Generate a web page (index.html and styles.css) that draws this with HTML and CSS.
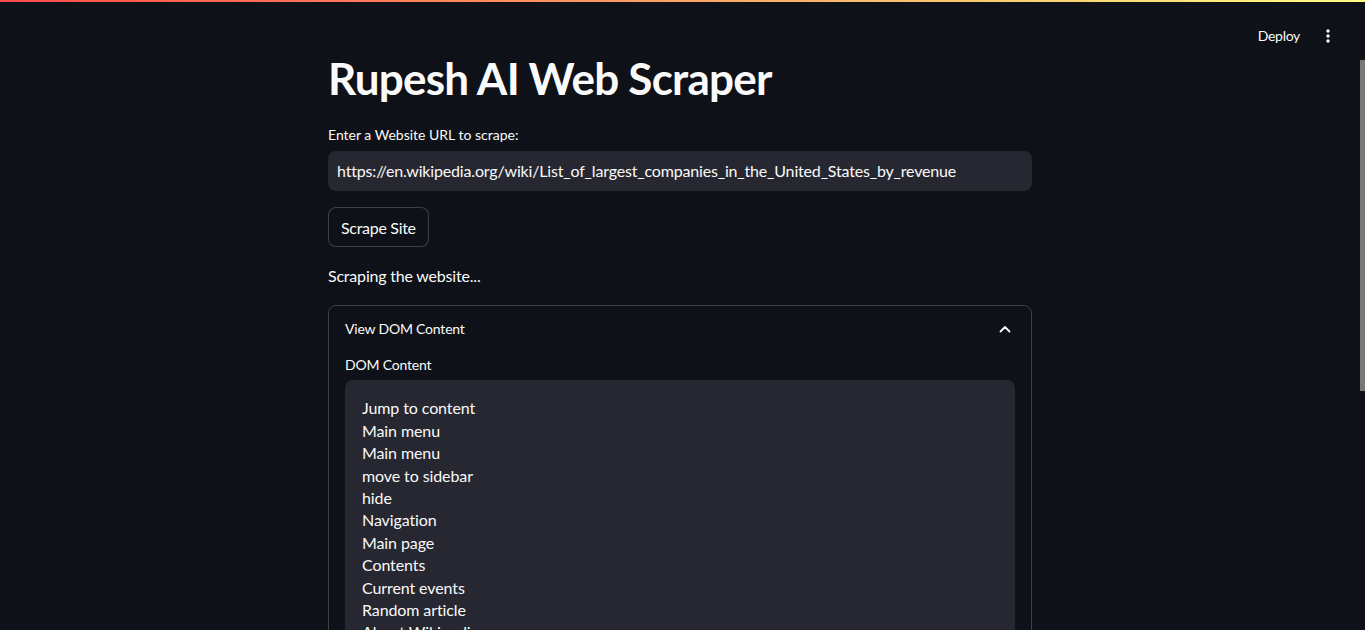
FILE: index.html
```html
<!DOCTYPE html>
<html lang="en">
<head>
<meta charset="utf-8">
<title>Rupesh AI Web Scraper</title>
<link rel="stylesheet" href="styles.css">
</head>
<body>
<div class="app">
  <header class="header">
    <div class="decoration"></div>
    <div class="toolbar">
      <span class="deploy">Deploy</span>
      <span class="kebab" aria-label="Main menu">
        <svg width="4" height="14" viewBox="0 0 4 14"><circle cx="2" cy="2" r="1.7" fill="#fafafa"/><circle cx="2" cy="7" r="1.7" fill="#fafafa"/><circle cx="2" cy="12" r="1.7" fill="#fafafa"/></svg>
      </span>
    </div>
  </header>
  <main class="main">
    <div class="block">
      <h1 class="title">Rupesh AI Web Scraper</h1>
      <label class="label">Enter a Website URL to scrape:</label>
      <div class="input">https://en.wikipedia.org/wiki/List_of_largest_companies_in_the_United_States_by_revenue</div>
      <div class="btn-row"><button class="btn">Scrape Site</button></div>
      <p class="status">Scraping the website...</p>
      <div class="expander">
        <div class="exp-head">
          <span>View DOM Content</span>
          <svg class="chev" width="12" height="8" viewBox="0 0 12 8"><path d="M1.5 6.5 L6 2 L10.5 6.5" fill="none" stroke="#fafafa" stroke-width="1.8" stroke-linecap="round" stroke-linejoin="round"/></svg>
        </div>
        <div class="exp-body">
          <div class="label">DOM Content</div>
          <div class="textarea">Jump to content
Main menu
Main menu
move to sidebar
hide
Navigation
Main page
Contents
Current events
Random article
About Wikipedia
Contact us
Contribute
Help
Learn to edit
Community portal
Recent changes
Upload file
Search
Search
Appearance
Donate
Create account
Log in</div>
        </div>
      </div>
    </div>
  </main>
  <div class="scroll-thumb"></div>
</div>
</body>
</html>
```
FILE: styles.css
```css
html, body {
  margin: 0;
  padding: 0;
  height: 100%;
  background: #0e1117;
  color: #fafafa;
  font-family: "Lato", "Noto Sans", sans-serif;
  overflow: hidden;
}
.app {
  position: relative;
  display: flex;
  flex-direction: column;
  height: 100vh;
}
.header {
  flex: none;
  height: 50px;
  background: #0e1117;
  display: flex;
  flex-direction: column;
}
.decoration {
  height: 2px;
  background: linear-gradient(90deg, #ff4b4b, #fffd80);
}
.toolbar {
  display: flex;
  justify-content: flex-end;
  align-items: center;
  gap: 26px;
  padding: 24px 35px 0 0;
}
.deploy {
  font-size: 14px;
  line-height: 20px;
  letter-spacing: -0.3px;
}
.kebab {
  display: flex;
  align-items: center;
}
.main {
  flex: 1;
  overflow: hidden;
  padding-right: 5px;
}
.scroll-thumb {
  position: absolute;
  top: 60px;
  right: 0;
  width: 5px;
  height: 331px;
  background: #787878;
}
.block {
  width: 704px;
  margin: 0 auto;
  padding: 2px 0 160px;
}
.title {
  margin: 0;
  font-size: 44px;
  font-weight: 700;
  line-height: 52.8px;
  letter-spacing: -0.75px;
  padding-bottom: 19.5px;
}
.label {
  display: block;
  font-size: 14px;
  line-height: 21px;
  margin-bottom: 6px;
}
.input {
  height: 40px;
  box-sizing: border-box;
  background: #262730;
  border-radius: 8px;
  padding: 0 9px;
  font-size: 16px;
  line-height: 40px;
  letter-spacing: -0.17px;
  white-space: nowrap;
}
.btn-row {
  margin-top: 16px;
}
.btn {
  height: 40px;
  padding: 0 12px;
  background: #0e1117;
  color: #fafafa;
  border: 1px solid rgba(250, 250, 250, 0.2);
  border-radius: 8px;
  font-family: inherit;
  font-size: 16px;
  letter-spacing: -0.3px;
}
.status {
  margin: 16px 0 0;
  font-size: 16px;
  line-height: 25.6px;
  letter-spacing: -0.2px;
}
.expander {
  margin-top: 16px;
  border: 1px solid rgba(250, 250, 250, 0.2);
  border-radius: 8px;
}
.exp-head {
  display: flex;
  align-items: center;
  justify-content: space-between;
  padding: 12px 20px 12px 16px;
  font-size: 14px;
  line-height: 22.4px;
  letter-spacing: -0.2px;
}
.exp-body {
  padding: 2px 16px 16px;
}
.exp-body .label {
  margin-bottom: 5px;
  letter-spacing: -0.2px;
}
.textarea {
  box-sizing: border-box;
  height: 488px;
  overflow: hidden;
  background: #262730;
  border-radius: 8px;
  padding: 17px 17px;
  font-size: 16px;
  line-height: 22.4px;
  letter-spacing: -0.1px;
  white-space: pre-line;
}
```
